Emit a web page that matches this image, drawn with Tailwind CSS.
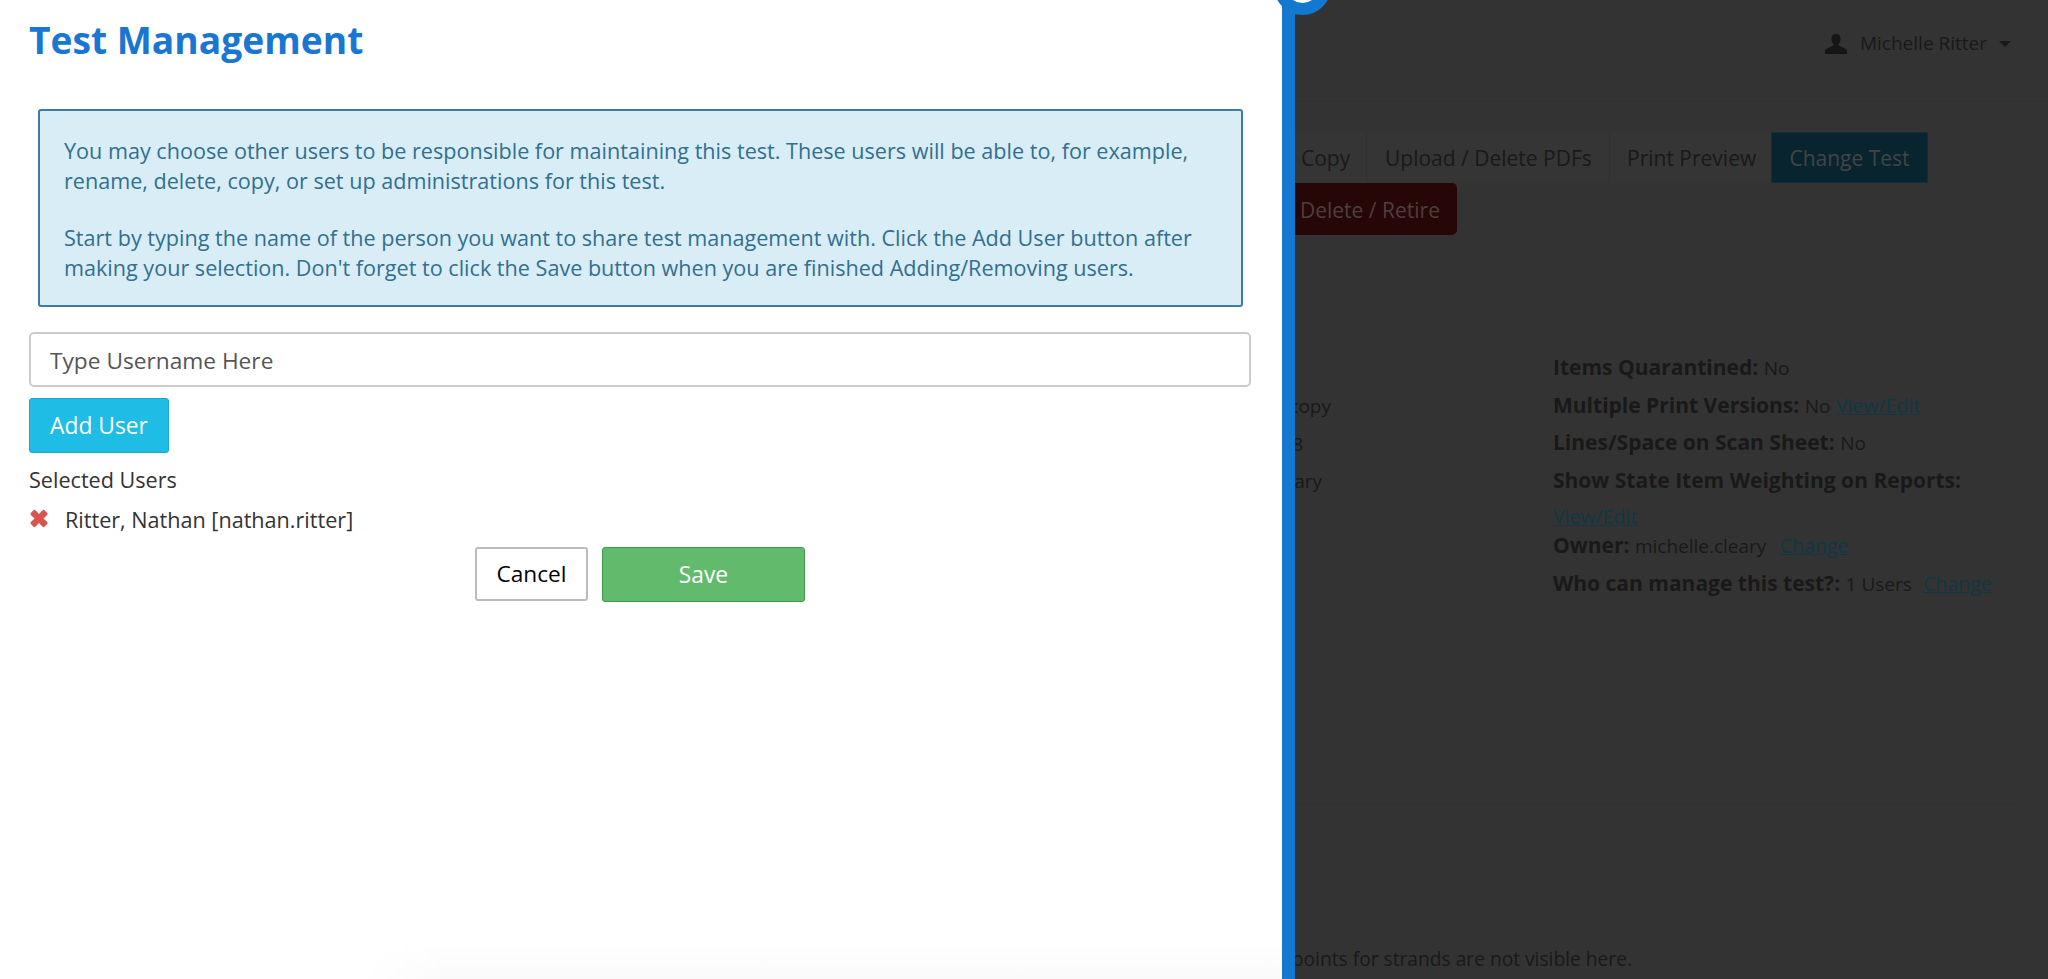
<!DOCTYPE html>
<html lang="en">
<head>
  <meta charset="UTF-8" />
  <title>Test Management</title>
  <script src="https://cdn.jsdelivr.net/npm/@tailwindcss/browser@4"></script>
</head>
<body class="font-['Open_Sans',sans-serif] overflow-hidden">
  <div class="relative flex h-[979px] w-[2048px] overflow-hidden bg-[#333333]">

    <!-- Slide-over panel -->
    <div class="relative w-[1282px] shrink-0 bg-white pl-[29px] text-[21.6px] leading-[30px] text-[#333333]">
      <h1 class="pt-[16px] text-[37.2px] leading-[48px] font-bold text-[#1976d2]">Test Management</h1>

      <div class="mt-[45px] ml-[9px] h-[198px] w-[1205px] rounded-[3px] border-2 border-[#3f7d9c] bg-[#d9edf7] px-[24px] pt-[25px] text-[#31708f]">
        <p>You may choose other users to be responsible for maintaining this test. These users will be able to, for example, rename, delete, copy, or set up administrations for this test.</p>
        <p class="mt-[27px]">Start by typing the name of the person you want to share test management with. Click the Add User button after making your selection. Don't forget to click the Save button when you are finished Adding/Removing users.</p>
      </div>

      <input type="text" placeholder="Type Username Here" class="mt-[25px] block h-[55px] w-[1222px] rounded-[5px] border-2 border-[#cccccc] bg-white px-[19px] pt-[2px] text-[22.7px] text-[#555555] placeholder:text-[#555555]" />

      <button class="mt-[11px] block h-[55px] w-[140px] rounded-[3px] border border-[#1fa5d0] bg-[#1fbce6] text-center text-[22.8px] text-white">Add User</button>

      <p class="mt-[12px]">Selected Users</p>

      <div class="mt-[10px] flex items-center gap-[16px]">
        <svg class="h-[19px] w-[20px] -translate-y-[2px] fill-[#d9534f]" viewBox="0 0 20 20"><path d="M6.2 1.4 10 5.3l3.8-3.9a1.4 1.4 0 0 1 2 0l2.8 2.8a1.4 1.4 0 0 1 0 2L14.7 10l3.900 3.800a1.400 1.400 0 0 1 0 2l-2.800 2.800a1.400 1.400 0 0 1-2 0L10 14.700l-3.800 3.900a1.400 1.400 0 0 1-2 0l-2.800-2.800a1.400 1.400 0 0 1 0-2L5.300 10 1.400 6.200a1.400 1.400 0 0 1 0-2l2.800-2.800a1.400 1.400 0 0 1 2 0z"/></svg>
        <span>Ritter, Nathan [nathan.ritter]</span>
      </div>

      <div class="mt-[12px] ml-[446px] flex gap-[14px]">
        <button class="h-[54px] w-[113px] rounded-[3px] border-2 border-[#bbbbbb] bg-white text-[22.7px] text-black">Cancel</button>
        <button class="h-[55px] w-[203px] rounded-[3px] border border-[#3c9a48] bg-[#62bb6d] text-[22.8px] text-white">Save</button>
      </div>

      <div class="absolute right-0 bottom-0 left-[360px] h-[36px] bg-linear-to-t from-[#fafafa] to-white [mask-image:linear-gradient(to_right,transparent,black_90px)]"></div>
    </div>

    <!-- Blue edge of the panel -->
    <div class="w-[13px] shrink-0 bg-[#1477d0]"></div>

    <!-- Dimmed page behind -->
    <div class="min-w-0 flex-1 overflow-hidden text-[21px] leading-[30px] text-[#191919]">
      <div class="flex h-[102px] items-start justify-end border-b border-[#303030] pt-[28px] pr-[37px] text-[19px]">
        <svg class="mt-[6px] mr-[13px] h-[20px] w-[22px] fill-[#161616]" viewBox="0 0 22 20"><path d="M11 0c3 0 4.500 2.300 4.500 5 0 2-.8 3.700-1.800 4.900-.5.700-.3 1.500.6 1.900l5.600 2.700c1.200.6 2 1.400 2 2.800V20H0v-2.700c0-1.400.8-2.200 2-2.800l5.700-2.700c.9-.4 1.100-1.200.6-1.900C7.300 8.700 6.500 7 6.500 5c0-2.700 1.500-5 4.500-5z"/></svg>
        <span>Michelle Ritter</span>
        <span class="mt-[13px] ml-[12px] h-0 w-0 border-x-[6px] border-t-[6px] border-x-transparent border-t-[#191919]"></span>
      </div>

      <div class="mt-[30px] flex h-[51px] items-stretch">
        <div class="flex w-[72px] items-center border-r border-[#303030] bg-[#353535] pl-[6px]">Copy</div>
        <div class="flex w-[243px] items-center border-r border-[#303030] bg-[#353535] pl-[18px]">Upload / Delete PDFs</div>
        <div class="flex w-[161px] items-center bg-[#353535] pl-[17px]">Print Preview</div>
        <div class="flex w-[157px] items-center justify-center border border-[#0b3040] bg-[#08242e] text-[#444444]">Change Test</div>
      </div>
      <div class="flex h-[52px] w-[162px] items-center rounded-r-[5px] bg-[#260606] pt-[1px] pl-[5px] text-[#4e3f3f]">Delete / Retire</div>

      <div class="mt-[117px] flex">
        <div class="w-[258px] shrink-0 pt-[35px] text-[19px]">
          <div class="flex h-[38px] w-[36px] items-center justify-end whitespace-nowrap">Photocopy</div>
          <div class="flex h-[37px] w-[8px] items-center justify-end whitespace-nowrap">18</div>
          <div class="flex h-[38px] w-[27px] items-center justify-end whitespace-nowrap">michelle.cleary</div>
        </div>
        <div class="w-[440px] shrink-0">
          <p class="h-[38px]"><b>Items Quarantined:</b> <span class="text-[19px]">No</span></p>
          <p class="h-[37px]"><b>Multiple Print Versions:</b> <span class="text-[19px]">No</span> <a class="text-[19.5px] text-[#103743] underline">View/Edit</a></p>
          <p class="h-[38px]"><b>Lines/Space on Scan Sheet:</b> <span class="text-[19px]">No</span></p>
          <p class="h-[36px] whitespace-nowrap"><b>Show State Item Weighting on Reports:</b></p>
          <p class="h-[29px]"><a class="text-[19.5px] text-[#103743] underline">View/Edit</a></p>
          <p class="h-[38px]"><b>Owner:</b> <span class="text-[19px]">michelle.cleary</span> <a class="ml-[8px] text-[19.5px] text-[#103743] underline">Change</a></p>
          <p class="whitespace-nowrap"><b>Who can manage this test?:</b> <span class="text-[19px]">1 Users</span> <a class="ml-[6px] text-[19.5px] text-[#103743] underline">Change</a></p>
        </div>
      </div>

      <div class="mt-[204px] mr-[30px] border-t border-[#303030]"></div>
      <div class="mt-[140px] flex w-[337px] justify-end whitespace-nowrap text-[19.2px]">Note: Cut points for strands are not visible here.</div>
    </div>

    <!-- Ring peeking in at the top of the edge -->
    <div class="absolute top-[-42px] left-[1274px] h-[57px] w-[57px] rounded-full border-[12px] border-[#1477d0] bg-white"></div>
  </div>
</body>
</html>
